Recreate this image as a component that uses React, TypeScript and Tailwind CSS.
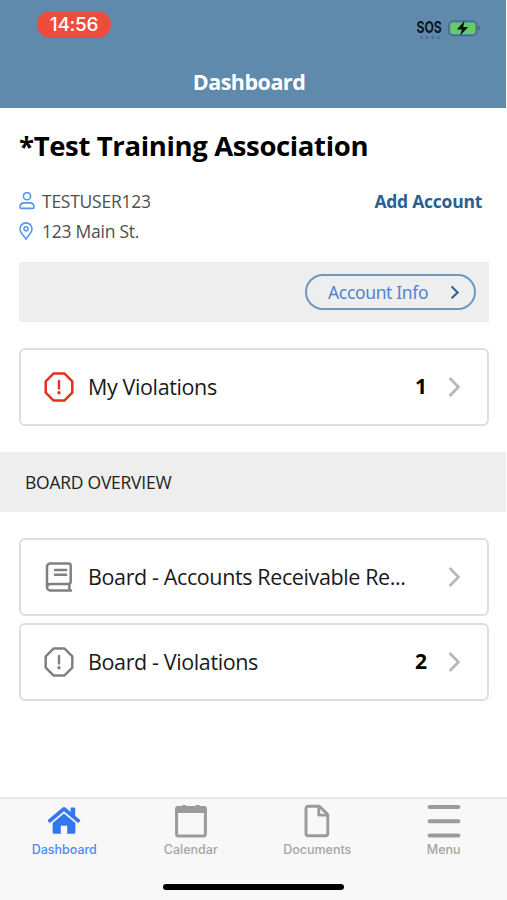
import type { ReactNode } from 'react';

type RowProps = {
  icon: ReactNode;
  label: string;
  count?: number;
};

const OctagonAlert = ({ className }: { className: string }) => (
  <svg width="32" height="32" viewBox="0 0 32 32" fill="none" className={className}>
    <path
      d="M10.7 2.4h10.6l8 8v11.2l-8 8H10.7l-8-8V10.4z"
      stroke="currentColor"
      strokeWidth="2.5"
      strokeLinejoin="round"
    />
    <path d="M16 10v7.6" stroke="currentColor" strokeWidth="2.4" strokeLinecap="round" />
    <circle cx="16" cy="21.8" r="1.7" fill="currentColor" />
  </svg>
);

const BookIcon = () => (
  <svg width="32" height="32" viewBox="0 0 32 32" fill="none" stroke="#808080" strokeWidth="2.5" strokeLinecap="round">
    <path d="M28 29.4H7.2A3.2 3.2 0 0 1 4 26.2V5.7a3.2 3.2 0 0 1 3.2-3.2h18.3a2.2 2.2 0 0 1 2.2 2.2v16.1a2.2 2.2 0 0 1-2.2 2.2H7.2A3.2 3.2 0 0 0 4 26.2" />
    <path d="M26.4 23.2v5.6M12 8.9h11.2M12 13.7h11.2" />
  </svg>
);

const Chevron = () => (
  <svg width="14" height="22" viewBox="0 0 14 22" fill="none">
    <path d="M1.6 2L10.4 11L1.6 20" stroke="#b8b8b8" strokeWidth="2.8" />
  </svg>
);

function Row({ icon, label, count }: RowProps) {
  return (
    <button className="flex h-[78px] w-full items-center rounded-md border-2 border-[#dedede] bg-white pl-[22px] pr-[25px] text-left">
      {icon}
      <span className="ml-[13px] whitespace-nowrap text-[21.5px] tracking-[-0.38px] text-[#1a1a1a]">{label}</span>
      <span className="ml-auto mr-[21px] text-[21px] font-bold text-black">{count}</span>
      <Chevron />
    </button>
  );
}

function Header() {
  return (
    <header className="flex h-[108px] flex-col bg-[#608aac]">
      <div className="flex h-[52px] items-start justify-between pl-[37px] pr-[26px] pt-[11px]">
        <span className="flex h-[27px] w-[74px] items-center justify-center rounded-full bg-[#ee4d3d] pt-px font-['Inter',sans-serif] text-[19px] font-medium tracking-[-0.3px] text-white">
          14:56
        </span>
        <div className="flex gap-[6px] pt-[7px]">
          <div className="flex w-[25px] flex-col items-center">
            <span className="origin-center scale-x-[0.74] font-['Inter',sans-serif] text-[16.5px] font-bold leading-[18px] text-[#0b1621]">
              SOS
            </span>
            <svg width="20" height="3" viewBox="0 0 20 3" fill="#48708f">
              <circle cx="1.5" cy="1.5" r="1.4" />
              <circle cx="7.2" cy="1.5" r="1.4" />
              <circle cx="12.9" cy="1.5" r="1.4" />
              <circle cx="18.5" cy="1.5" r="1.4" />
            </svg>
          </div>
          <svg width="32" height="20" viewBox="0 0 32 20" fill="none">
            <rect x="0.8" y="3.1" width="28" height="14.4" rx="4" stroke="#466a87" strokeWidth="1.3" />
            <rect x="2.4" y="4.7" width="24.8" height="11.2" rx="2.6" fill="#65cb67" />
            <path d="M30.2 7.8c1.7.7 2 1.5 2 2.5s-.3 1.8-2 2.5z" fill="#466a87" />
            <path d="M16.6 2.8L8.8 11.4h5L12 17.8L20.2 9h-5z" fill="#07150d" />
          </svg>
        </div>
      </div>
      <h1 className="pt-[14px] pr-[8px] text-center text-[21.5px] font-bold leading-[32px] tracking-[-0.5px] text-white">
        Dashboard
      </h1>
    </header>
  );
}

const tabs = [
  {
    name: 'Dashboard',
    active: true,
    icon: (
      <svg width="34" height="34" viewBox="0 0 34 34" fill="#3478f0">
        <path d="M17 9.6L28.4 19V29a.8.8 0 0 1-.8.8h-7.4v-8h-6.4v8H6.4a.8.8 0 0 1-.8-.8V19z" />
        <path d="M15.4 3.7a2.4 2.4 0 0 1 3.2 0l5 4.3V4.2c0-.5.3-.8.8-.8h3c.5 0 .8.3.8.8v7.6l4.7 4c.5.4.5.9.1 1.4l-1.2 1.3c-.4.4-.9.5-1.4.1L17 7.2 3.6 18.6c-.5.4-1 .3-1.4-.1L1 17.2c-.4-.5-.4-1 .1-1.4z" />
      </svg>
    ),
  },
  {
    name: 'Calendar',
    icon: (
      <svg width="34" height="34" viewBox="0 0 34 34" fill="none">
        <path d="M4 2h3.6c.4-1.5 5-1.5 5.4 0h8c.4-1.5 5-1.5 5.4 0H30a2.8 2.8 0 0 1 2.8 2.8V9H1.2V4.8A2.8 2.8 0 0 1 4 2z" fill="#9b9b9b" />
        <rect x="2.6" y="3.5" width="28.8" height="28.4" rx="2" stroke="#9b9b9b" strokeWidth="3" />
      </svg>
    ),
  },
  {
    name: 'Documents',
    icon: (
      <svg width="34" height="34" viewBox="0 0 34 34" fill="none" stroke="#9b9b9b" strokeWidth="2.9" strokeLinejoin="round">
        <path d="M8.2 2.2h11.2L27.8 10.6v18.9a2.2 2.2 0 0 1-2.2 2.2H8.2A2.2 2.2 0 0 1 6 29.5V4.4a2.2 2.2 0 0 1 2.2-2.2z" />
        <path d="M18.8 2.2v8.9h9" />
      </svg>
    ),
  },
  {
    name: 'Menu',
    icon: (
      <svg width="34" height="34" viewBox="0 0 34 34" stroke="#9b9b9b" strokeWidth="4" strokeLinecap="round">
        <path d="M2.6 3h28.8M2.6 17.2h28.8M2.6 31.4h28.8" />
      </svg>
    ),
  },
];

export default function App() {
  return (
    <div className="flex h-[900px] w-[507px] flex-col overflow-hidden bg-white font-['Open_Sans','Noto_Sans',sans-serif]">
      <div className="pr-px">
        <Header />
      </div>

      <main className="flex-1">
        <section className="pl-[19px] pr-[18px] pt-[20px]">
          <h2 className="text-[27.5px] font-bold leading-[36px] tracking-[-0.36px] text-black">
            *Test Training Association
          </h2>

          <div className="mt-[22px] flex justify-between">
            <div className="flex flex-col text-[17.5px] leading-[30px] tracking-[-0.25px] text-[#4f4f4f]">
              <div className="flex items-center gap-[7px]">
                <svg width="16" height="18" viewBox="0 0 16 18" fill="none" stroke="#5795ee" strokeWidth="1.6">
                  <circle cx="8" cy="4.2" r="3.6" />
                  <path d="M1 15.2c0-2.8 2-4.3 4.3-4.3h5.4c2.3 0 4.3 1.5 4.3 4.3 0 .8-.4 1.2-1.1 1.2H2.1c-.7 0-1.1-.4-1.1-1.2z" />
                </svg>
                <span>TESTUSER123</span>
              </div>
              <div className="flex items-center gap-[9px]">
                <svg width="14" height="18" viewBox="0 0 14 18" fill="none" stroke="#5795ee" strokeWidth="1.6">
                  <path d="M7 17C6 15.4 1 10.5 1 6.9a6 6 0 0 1 12 0C13 10.5 8 15.4 7 17z" />
                  <circle cx="7" cy="6.8" r="2" />
                </svg>
                <span>123 Main St.</span>
              </div>
            </div>
            <button className="mr-[7px] h-[30px] text-[17.5px] font-bold leading-[30px] tracking-[-0.25px] text-[#29608f]">
              Add Account
            </button>
          </div>

          <div className="mt-4 flex h-[60px] items-center justify-end bg-[#eee] pr-[13px]">
            <button className="flex h-[36px] w-[171px] items-center justify-between rounded-full border-2 border-[#6f98bc] pl-[21px] pr-[14px] font-['Noto_Sans',sans-serif] text-[17.5px] tracking-[-0.35px] text-[#5284cf]">
              Account Info
              <svg width="10" height="14" viewBox="0 0 10 14" fill="none">
                <path d="M1.6 1.6L7.6 7.4L1.6 13.2" stroke="#2f6592" strokeWidth="2.1" />
              </svg>
            </button>
          </div>

          <div className="mt-[26px]">
            <Row icon={<OctagonAlert className="text-[#e4301f]" />} label="My Violations" count={1} />
          </div>
        </section>

        <div className="mt-[26px] pr-px">
          <h3 className="h-[60px] bg-[#eee] pl-[25px] text-[17.5px] leading-[60px] tracking-[-0.25px] text-[#222]">
            BOARD OVERVIEW
          </h3>
        </div>

        <section className="flex flex-col gap-[7px] pl-[19px] pr-[18px] pt-[26px]">
          <Row icon={<BookIcon />} label="Board - Accounts Receivable Re..." />
          <Row icon={<OctagonAlert className="text-[#808080]" />} label="Board - Violations" count={2} />
        </section>
      </main>

      <footer className="flex h-[103px] flex-col items-center border-t-2 border-[#e9e9e9] bg-[#f8f8f8]">
        <nav className="grid w-full grid-cols-4 pt-[5px] pl-px">
          {tabs.map((tab) => (
            <a
              key={tab.name}
              className={`flex flex-col items-center gap-[3px] font-['Inter',sans-serif] text-[12.5px] font-medium leading-[18px] ${
                tab.active ? 'text-[#4d8af2]' : 'text-[#a5a5a5]'
              }`}
            >
              {tab.icon}
              {tab.name}
            </a>
          ))}
        </nav>
        <div className="mt-[25px] h-[6px] w-[181px] rounded-full bg-black" />
      </footer>
    </div>
  );
}
